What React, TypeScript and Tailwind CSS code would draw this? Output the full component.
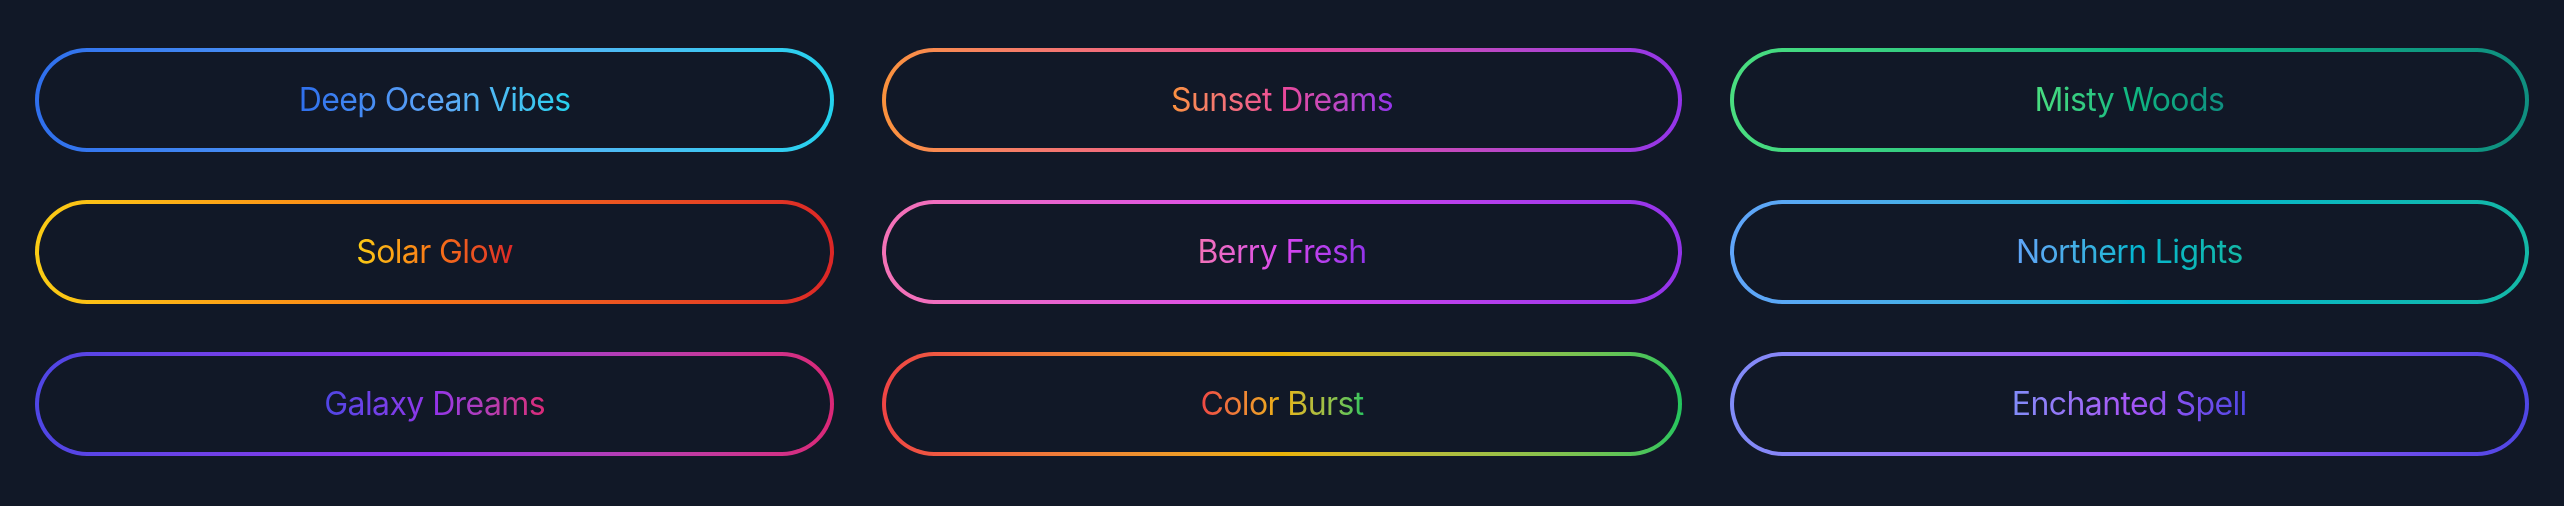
import React from "react";

type Swatch = {
  label: string;
  gradient: string;
};

// Each button: a gradient ring (outer layer) around a dark pill, with gradient-clipped text.
const swatches: Swatch[] = [
  { label: "Deep Ocean Vibes", gradient: "bg-gradient-to-r from-[#2f6fed] via-[#5ea6f8] to-[#23d2ee]" },
  { label: "Sunset Dreams", gradient: "bg-gradient-to-r from-[#fb923c] via-[#ec4899] to-[#9333ea]" },
  { label: "Misty Woods", gradient: "bg-gradient-to-r from-[#4ade80] via-[#10b981] to-[#0f8f80]" },
  { label: "Solar Glow", gradient: "bg-gradient-to-r from-[#facc15] via-[#f97316] to-[#dc2626]" },
  { label: "Berry Fresh", gradient: "bg-gradient-to-r from-[#f472b6] via-[#d946ef] to-[#9333ea]" },
  { label: "Northern Lights", gradient: "bg-gradient-to-r from-[#60a5fa] via-[#06b6d4] to-[#14b8a6]" },
  { label: "Galaxy Dreams", gradient: "bg-gradient-to-r from-[#4f46e5] via-[#9333ea] to-[#db2777]" },
  { label: "Color Burst", gradient: "bg-gradient-to-r from-[#ef4444] via-[#eab308] to-[#22c55e]" },
  { label: "Enchanted Spell", gradient: "bg-gradient-to-r from-[#818cf8] via-[#a855f7] to-[#4f46e5]" },
];

function GradientButton({ s }: { s: Swatch }) {
  return (
    <button type="button" className={`block h-[104px] rounded-full p-[4px] ${s.gradient}`}>
      <span className="flex h-full items-center justify-center rounded-full bg-[#111827]">
        <span
          className={`bg-clip-text text-[32px] leading-[48px] tracking-[-0.6px] text-transparent ${s.gradient}`}
          style={{ fontFamily: "Inter, 'Noto Sans', sans-serif" }}
        >
          {s.label}
        </span>
      </span>
    </button>
  );
}

export default function App() {
  return (
    <div className="h-[506px] w-full overflow-hidden bg-[#111827] px-[35px] py-[48px]">
      <div className="grid grid-cols-3 gap-x-[48px] gap-y-[48px]">
        {swatches.map((s) => (
          <GradientButton key={s.label} s={s} />
        ))}
      </div>
    </div>
  );
}
